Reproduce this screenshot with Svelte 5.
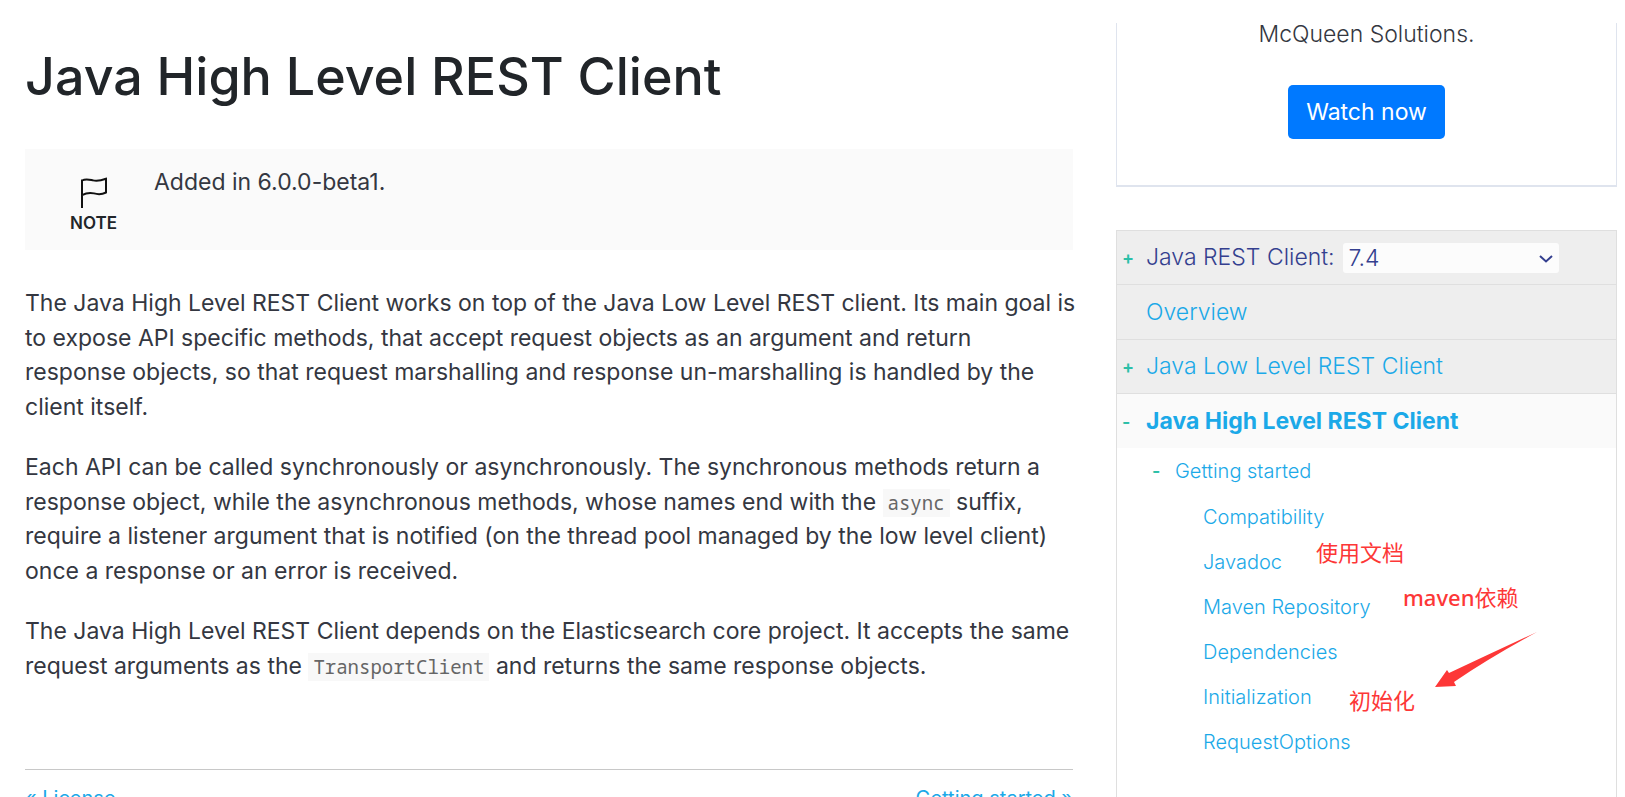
<script>
  let version = "7.4";
  const versions = ["7.4", "7.3", "7.2", "7.1", "7.0", "6.8"];

  const pages = [
    "Compatibility",
    "Javadoc",
    "Maven Repository",
    "Dependencies",
    "Initialization",
    "RequestOptions",
  ];

  // handwritten remarks over the table of contents
  const remarks = [
    { text: "使用文档", left: 199, top: 87 },
    { latin: "maven", text: "依赖", left: 286, top: 132 },
    { text: "初始化", left: 232, top: 235 },
  ];
</script>

<div class="page">
  <main>
    <h1>Java High Level REST Client</h1>

    <div class="note">
      <div class="note-icon">
        <svg width="28" height="32" viewBox="0 0 28 32" aria-hidden="true">
          <path
            d="M2 31V2.500M2 3.500C6 1.200 9.500 2.600 13 3.400C17 4.300 21 3.600 26 1.800V15.500C21 18 17.500 17.400 14 16.400C10 15.400 6 16 2 18.200"
            fill="none"
            stroke="#111"
            stroke-width="2"
          />
        </svg>
        <strong>NOTE</strong>
      </div>
      <p>Added in 6.0.0-beta1.</p>
    </div>

    <div class="text">
      <p>
        The Java High Level REST Client works on top of the Java Low Level REST
        client. Its main goal is to expose API specific methods, that accept
        request objects as an argument and return response objects, so that
        request marshalling and response un-marshalling is handled by the client
        itself.
      </p>
      <p>
        Each API can be called synchronously or asynchronously. The synchronous
        methods return a response object, while the asynchronous methods, whose
        names end with the <code>async</code> suffix, require a listener argument
        that is notified (on the thread pool managed by the low level client) once
        a response or an error is received.
      </p>
      <p>
        The Java High Level REST Client depends on the Elasticsearch core project.
        It accepts the same request arguments as the <code>TransportClient</code>
        and returns the same response objects.
      </p>
    </div>

    <div class="pager">
      <a href="#license">« License</a>
      <a href="#getting-started">Getting started »</a>
    </div>
  </main>

  <aside>
    <div class="video">
      <p>McQueen Solutions.</p>
      <button type="button">Watch now</button>
    </div>

    <nav>
      <div class="row title">
        <span class="sign">+</span>
        <label for="version">Java REST Client:</label>
        <div class="select">
          <select id="version" bind:value={version}>
            {#each versions as v}
              <option value={v}>{v}</option>
            {/each}
          </select>
          <svg width="14" height="8" viewBox="0 0 14 8" aria-hidden="true">
            <path d="M1 1L7 6.500L13 1" fill="none" stroke="#343f8f" stroke-width="2" />
          </svg>
        </div>
      </div>
      <div class="row">
        <span class="sign"></span>
        <a href="#overview">Overview</a>
      </div>
      <div class="row">
        <span class="sign">+</span>
        <a href="#low">Java Low Level REST Client</a>
      </div>
      <div class="row current">
        <span class="sign">-</span>
        <a href="#high">Java High Level REST Client</a>
      </div>

      <div class="tree">
        <div class="branch">
          <span class="sign">-</span>
          <a href="#getting-started">Getting started</a>
        </div>
        <ul>
          {#each pages as page}
            <li><a href="#{page}">{page}</a></li>
          {/each}
        </ul>

        {#each remarks as r}
          <span class="remark" style="left: {r.left}px; top: {r.top}px">
            {#if r.latin}<b>{r.latin}</b>{/if}{r.text}
          </span>
        {/each}
        <svg class="arrow" width="104" height="58" viewBox="0 0 104 58" aria-hidden="true">
          <path d="M103 1Q60 21 15 42L13 39L1 56L22 55L20 51Q55 27 103 1Z" fill="#fd3737" />
        </svg>
      </div>
    </nav>
  </aside>
</div>

<style>
  :global(body) {
    margin: 0;
    background: #fff;
  }

  .page {
    display: grid;
    grid-template-columns: 1048fr 501fr;
    gap: 43px;
    height: 100vh;
    padding: 23px 8px 0 25px;
    box-sizing: border-box;
    overflow: hidden;
    font-family: Inter, "Noto Sans CJK SC", sans-serif;
    font-size: 23px;
    font-weight: 400;
    line-height: 1.5;
    color: #343741;
  }

  a {
    color: #1ba9e8;
    text-decoration: none;
  }

  h1 {
    margin: 21px 0 40px;
    color: #212529;
    font-size: 52px;
    font-weight: 500;
    line-height: 65px;
  }

  main p {
    margin: 0 0 26px;
  }

  .text {
    margin-right: -5px;
  }

  .note {
    display: flex;
    height: 101px;
    margin-bottom: 36px;
    background: #fafafa;
  }

  .note-icon {
    display: flex;
    flex-direction: column;
    align-items: center;
    width: 129px;
    padding: 28px 0 0 8px;
    box-sizing: border-box;
  }

  .note-icon strong {
    color: #212529;
    font-size: 17px;
    font-weight: 600;
    line-height: 28px;
  }

  .note p {
    margin: 16px 0 0;
  }

  code {
    padding: 1px 5px;
    background: #f8f8f8;
    color: #666;
    font-family: "Noto Sans Mono", "DejaVu Sans Mono", monospace;
    font-size: 19px;
    line-height: 20px;
  }

  .pager {
    display: flex;
    justify-content: space-between;
    margin-top: 86px;
    padding-top: 13px;
    border-top: 1px solid #c8c8c8;
    font-size: 20px;
  }

  aside {
    display: flex;
    flex-direction: column;
    font-weight: 300;
  }

  .video {
    display: flex;
    flex-direction: column;
    align-items: center;
    padding-bottom: 46px;
    border: 1px solid #dfe4ee;
    border-width: 0 1px 2px;
  }

  .video p {
    margin: 0 0 40px;
    line-height: 22px;
  }

  .video button {
    padding: 10px 18px;
    border: 0;
    border-radius: 5px;
    background: #0079ff;
    color: #fff;
    font: inherit;
    font-weight: 400;
    line-height: 34px;
  }

  nav {
    flex: 1;
    margin-top: 43px;
    border: 1px solid #dfdfdf;
    border-bottom: 0;
  }

  .row {
    display: flex;
    align-items: center;
    height: 54px;
    box-sizing: border-box;
    border-bottom: 1px solid #dfdfdf;
    background: #eee;
  }

  .row:nth-child(2) {
    height: 55px;
  }

  .row.current {
    border-bottom: 0;
    background: #fafafa;
  }

  .row.current a {
    font-weight: 700;
  }

  .title {
    color: #343f8f;
  }

  .sign {
    width: 24px;
    padding-left: 5px;
    box-sizing: border-box;
    color: #2bbfa8;
    font-size: 18px;
    font-weight: 600;
  }

  .row .sign {
    margin-right: 5px;
  }

  .select {
    position: relative;
    width: 216px;
    margin-left: 8px;
  }

  .select svg {
    position: absolute;
    top: 12px;
    right: 6px;
    pointer-events: none;
  }

  select {
    display: block;
    width: 100%;
    height: 30px;
    padding: 0 6px;
    border: 0;
    border-radius: 3px;
    appearance: none;
    background: #fcfcfc;
    color: inherit;
    font: inherit;
    line-height: 30px;
  }

  .tree {
    position: relative;
    font-size: 20px;
    line-height: 30px;
  }

  .branch {
    display: flex;
    align-items: center;
    padding: 8px 0 9px 30px;
  }

  .branch .sign {
    width: 28px;
  }

  ul {
    margin: 0;
    padding: 0 0 0 86px;
    list-style: none;
  }

  li {
    height: 45px;
  }

  li a {
    line-height: 44px;
  }

  .remark {
    position: absolute;
    color: #fd3737;
    font-family: "Noto Sans", "Noto Sans CJK SC", sans-serif;
    font-size: 22px;
    font-weight: 400;
    line-height: 34px;
    white-space: nowrap;
  }

  .remark b {
    font-weight: 500;
  }

  .arrow {
    position: absolute;
    left: 317px;
    top: 183px;
  }
</style>
